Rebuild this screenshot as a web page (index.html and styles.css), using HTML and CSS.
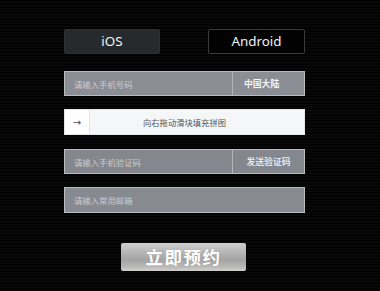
FILE: index.html
```html
<!DOCTYPE html>
<html lang="zh-CN">
<head>
<meta charset="utf-8">
<title>预约</title>
<link rel="stylesheet" href="styles.css">
</head>
<body>
<div class="panel">
  <div class="tabs">
    <div class="tab tab-active">iOS</div>
    <div class="tab tab-outline">Android</div>
  </div>
  <div class="field field-phone">
    <input class="field-input" type="text" placeholder="请输入手机号码">
    <div class="field-side side-country">中国大陆</div>
  </div>
  <div class="slider">
    <div class="slider-handle">→</div>
    <div class="slider-text">向右拖动滑块填充拼图</div>
  </div>
  <div class="field field-code">
    <input class="field-input" type="text" placeholder="请输入手机验证码">
    <div class="field-side side-send">发送验证码</div>
  </div>
  <div class="field field-mail">
    <input class="field-input" type="text" placeholder="请输入常用邮箱">
  </div>
  <div class="submit-wrap">
    <div class="submit">立即预约</div>
  </div>
</div>
</body>
</html>
```
FILE: styles.css
```css
* { box-sizing: border-box; }
html, body { margin: 0; padding: 0; }
body {
  width: 380px;
  height: 291px;
  overflow: hidden;
  background: #030303 repeating-linear-gradient(to bottom, #030303 0 2px, #0b0b0b 2px 3px);
  font-family: "Noto Sans", "Noto Sans CJK SC", sans-serif;
}
.panel {
  width: 241px;
  margin-left: 64px;
  padding-top: 29px;
  display: flex;
  flex-direction: column;
}
.tabs {
  display: flex;
  justify-content: space-between;
  height: 25px;
}
.tab {
  width: 96px;
  height: 25px;
  border-radius: 2px;
  display: flex;
  align-items: center;
  justify-content: center;
  font-size: 13.4px;
  color: #f2f2f2;
  line-height: 1;
}
.tab-active {
  background: #272a2d;
  border: 1px solid #2e3134;
}
.tab-outline {
  width: 97px;
  background: #020202;
  border: 1px solid #3a3b3d;
}
.field {
  display: flex;
  height: 25px;
  border: 1px solid #b9bbbf;
  background: #898c93;
}
.field-phone { margin-top: 17px; background: #8b8e95; }
.field-code { margin-top: 14px; background: #84878d; }
.field-mail { margin-top: 13px; height: 26px; background: #878a91; }
.field-input {
  flex: 1;
  min-width: 0;
  border: 0;
  outline: 0;
  background: transparent;
  padding: 0 0 0 9px;
  font-family: "Noto Sans CJK SC", sans-serif;
  font-size: 8.4px;
  color: #e6e7e9;
}
.field-input::placeholder { color: #c9cbcf; }
.field-side {
  width: 72px;
  border-left: 1px solid #b3b5b9;
  display: flex;
  align-items: center;
  font-family: "Noto Sans CJK SC", sans-serif;
  font-size: 8.8px;
  font-weight: 700;
  color: #f4f4f5;
}
.side-country { padding-left: 11px; }
.side-send { justify-content: center; font-weight: 500; }
.slider {
  margin-top: 13px;
  height: 26px;
  display: flex;
  position: relative;
  background: #f5f6f8;
  border: 1px solid #e4e6ea;
}
.slider-handle {
  width: 25px;
  background: #ffffff;
  border-right: 1px solid #e2e3e6;
  display: flex;
  align-items: center;
  justify-content: center;
  font-family: "DejaVu Sans", sans-serif;
  font-size: 10px;
  color: #4a4a4a;
}
.slider-text {
  position: absolute;
  left: 0;
  right: 0;
  top: 0;
  bottom: 0;
  display: flex;
  align-items: center;
  justify-content: center;
  font-family: "Noto Sans CJK SC", sans-serif;
  font-size: 8.3px;
  color: #555;
  pointer-events: none;
}
.submit-wrap {
  margin-top: 30px;
  padding-left: 57px;
}
.submit {
  width: 125px;
  height: 28px;
  border-radius: 2px;
  background: linear-gradient(to bottom, #cfcfcf 0%, #b4b4b4 35%, #a3a3a3 60%, #b9b9b8 85%, #d2d1cf 100%);
  display: flex;
  align-items: center;
  justify-content: center;
  font-family: "Noto Sans CJK SC", sans-serif;
  font-size: 17.5px;
  font-weight: 700;
  letter-spacing: 1.5px;
  color: #ffffff;
  text-shadow: 0 0 1px rgba(0,0,0,0.15);
  line-height: 1;
}
```
